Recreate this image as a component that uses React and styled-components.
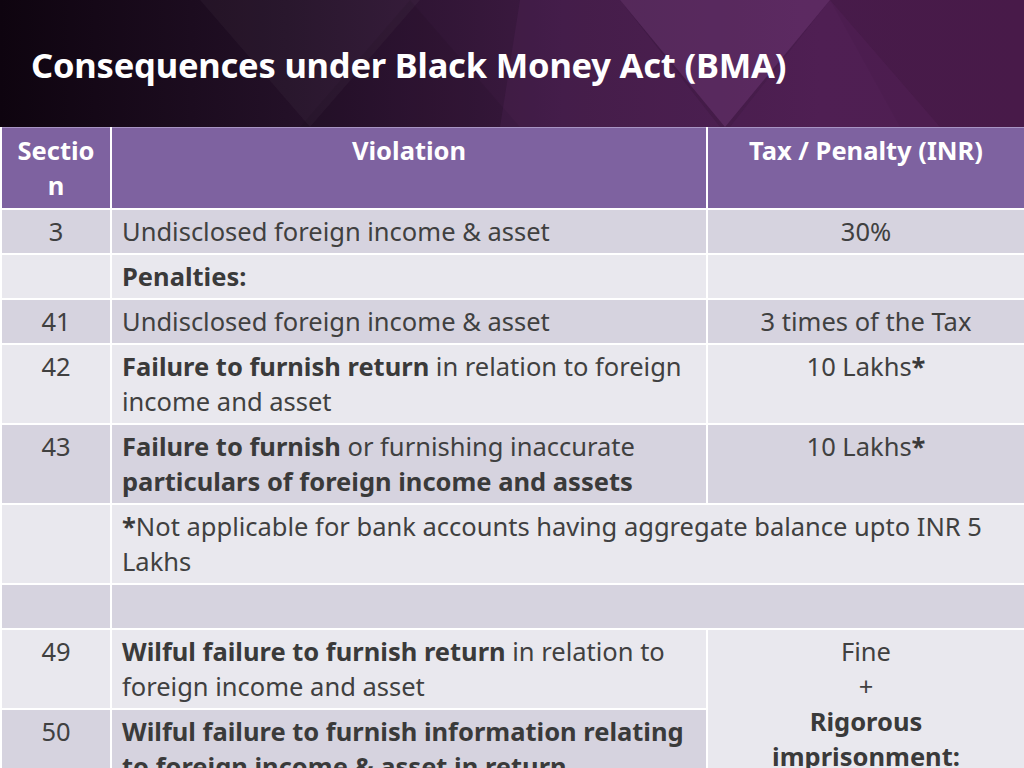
import React from 'react';
import styled, { createGlobalStyle } from 'styled-components';

const GlobalStyle = createGlobalStyle`
  html, body {
    margin: 0;
    padding: 0;
    background: #ffffff;
    overflow: hidden;
  }
  body {
    font-family: "Noto Sans", "Open Sans", sans-serif;
  }
`;

const Slide = styled.div`
  width: 1024px;
  height: 768px;
  overflow: hidden;
  display: flex;
  flex-direction: column;
  background: #ffffff;
`;

const Banner = styled.header`
  position: relative;
  height: 127px;
  flex: 0 0 127px;
  display: flex;
  align-items: center;
  padding-left: 31px;
  background: linear-gradient(90deg, #0e040f 0%, #231027 28%, #3d1a42 55%, #4a1d4e 80%, #4b1c4c 100%);
  overflow: hidden;
`;

const Facets = styled.svg`
  position: absolute;
  inset: 0;
  width: 100%;
  height: 100%;
`;

const Title = styled.h1`
  position: relative;
  margin: 2px 0 0;
  font-family: "Noto Sans", "Open Sans", sans-serif;
  font-weight: 700;
  font-size: 34.5px;
  letter-spacing: -0.2px;
  color: #ffffff;
`;

const Table = styled.table`
  width: 1024px;
  border-collapse: collapse;
  table-layout: fixed;
  font-family: "Noto Sans", "Open Sans", sans-serif;
  font-size: 25.5px;
  line-height: 35px;
  color: #404040;
`;

const Head = styled.th`
  background: #7e62a0;
  color: #ffffff;
  font-weight: 700;
  text-align: center;
  vertical-align: top;
  padding: 5px 10px 5px;
  border: 2px solid #ffffff;
  border-top: 1px solid #a894c4;
  height: 70px;
  word-break: break-all;
`;

const Row = styled.tr`
  background: ${p => (p.$dark ? '#d6d3df' : '#e9e8ee')};
`;

const Cell = styled.td`
  border: 2px solid #ffffff;
  vertical-align: top;
  padding: 4px 10px 4px;
  text-align: ${p => p.$align || 'left'};
  background: ${p => p.$bg || 'transparent'};
  font-weight: ${p => (p.$bold ? 700 : 400)};
  color: ${p => (p.$bold ? '#3a3a3a' : '#404040')};
  ${p => (p.$tall ? 'height: 35px;' : '')}
`;

const B = styled.b`
  font-weight: 700;
  color: #3a3a3a;
`;

export default function App() {
  return (
    <>
      <GlobalStyle />
      <Slide>
        <Banner>
          <Facets viewBox="0 0 1024 127" preserveAspectRatio="none">
            <polygon points="200,0 420,0 310,127" fill="#ffffff" opacity="0.03" />
            <polygon points="410,0 520,127 300,127" fill="#000000" opacity="0.06" />
            <polygon points="620,0 830,0 725,127" fill="#a05aa8" opacity="0.22" />
            <polygon points="520,0 620,0 720,127 500,127" fill="#7a3a80" opacity="0.12" />
            <polygon points="830,0 1024,0 1024,127 900,127" fill="#000000" opacity="0.04" />
            <polygon points="730,127 830,0 940,127" fill="#6b2f70" opacity="0.15" />
          </Facets>
          <Title>Consequences under Black Money Act (BMA)</Title>
        </Banner>
        <Table>
          <colgroup>
            <col style={{ width: 110 }} />
            <col style={{ width: 596 }} />
            <col style={{ width: 318 }} />
          </colgroup>
          <thead>
            <tr>
              <Head>Section</Head>
              <Head>Violation</Head>
              <Head>Tax / Penalty (INR)</Head>
            </tr>
          </thead>
          <tbody>
            <Row $dark>
              <Cell $align="center">3</Cell>
              <Cell>Undisclosed foreign income &amp; asset</Cell>
              <Cell $align="center">30%</Cell>
            </Row>
            <Row>
              <Cell />
              <Cell $bold>Penalties:</Cell>
              <Cell />
            </Row>
            <Row $dark>
              <Cell $align="center">41</Cell>
              <Cell>Undisclosed foreign income &amp; asset</Cell>
              <Cell $align="center">3 times of the Tax</Cell>
            </Row>
            <Row>
              <Cell $align="center">42</Cell>
              <Cell>
                <B>Failure to furnish return</B> in relation to foreign income and asset
              </Cell>
              <Cell $align="center">
                10 Lakhs<B>*</B>
              </Cell>
            </Row>
            <Row $dark>
              <Cell $align="center">43</Cell>
              <Cell>
                <B>Failure to furnish</B> or furnishing inaccurate{' '}
                <B>particulars of foreign income and assets</B>
              </Cell>
              <Cell $align="center">
                10 Lakhs<B>*</B>
              </Cell>
            </Row>
            <Row>
              <Cell />
              <Cell colSpan={2}>
                <B>*</B>Not applicable for bank accounts having aggregate balance upto INR 5 Lakhs
              </Cell>
            </Row>
            <Row $dark>
              <Cell $tall />
              <Cell colSpan={2} />
            </Row>
            <Row>
              <Cell $align="center">49</Cell>
              <Cell>
                <B>Wilful failure to furnish return</B> in relation to foreign income and asset
              </Cell>
              <Cell $align="center" rowSpan={2} $bg="#e9e8ee">
                Fine
                <br />+<br />
                <B>Rigorous imprisonment:</B>
              </Cell>
            </Row>
            <Row $dark>
              <Cell $align="center">50</Cell>
              <Cell $bold>Wilful failure to furnish information relating to foreign income &amp; asset in return</Cell>
            </Row>
          </tbody>
        </Table>
      </Slide>
    </>
  );
}
